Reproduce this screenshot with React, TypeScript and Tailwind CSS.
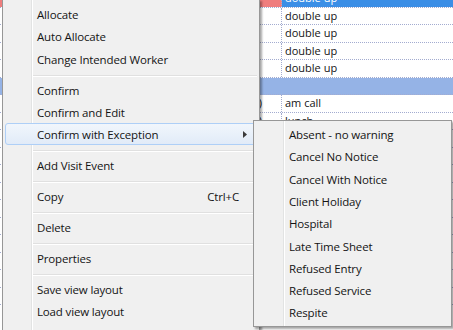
type Item = { label: string; shortcut?: string; sub?: boolean; active?: boolean } | null

const mainItems: Item[] = [
  { label: "Allocate" },
  { label: "Auto Allocate" },
  { label: "Change Intended Worker" },
  null,
  { label: "Confirm" },
  { label: "Confirm and Edit" },
  { label: "Confirm with Exception", sub: true, active: true },
  null,
  { label: "Add Visit Event" },
  null,
  { label: "Copy", shortcut: "Ctrl+C" },
  null,
  { label: "Delete" },
  null,
  { label: "Properties" },
  null,
  { label: "Save view layout" },
  { label: "Load view layout" },
  { label: "Default view layout" },
]

const subItems: Item[] = [
  { label: "Absent - no warning" },
  { label: "Cancel No Notice" },
  { label: "Cancel With Notice" },
  { label: "Client Holiday" },
  { label: "Hospital" },
  { label: "Late Time Sheet" },
  { label: "Refused Entry" },
  { label: "Refused Service" },
  { label: "Respite" },
]

const rows = [
  { kind: "sel", text: "double up" },
  { kind: "row", text: "double up" },
  { kind: "row", text: "double up" },
  { kind: "row", text: "double up" },
  { kind: "row", text: "double up" },
  { kind: "band", text: "" },
  { kind: "row", text: "am call", left: "10:00)" },
  { kind: "row", text: "lunch", left: "12:00)" },
  { kind: "row", text: "" },
  { kind: "row", text: "" },
  { kind: "row", text: "" },
  { kind: "row", text: "" },
  { kind: "row", text: "" },
  { kind: "row", text: "" },
  { kind: "row", text: "" },
  { kind: "row", text: "" },
  { kind: "row", text: "" },
  { kind: "row", text: "" },
]

function MenuRow({ item, textPad }: { item: NonNullable<Item>; textPad: string }) {
  return (
    <div
      className={`flex h-[22.3px] items-center rounded-[3px] border pt-px ${textPad} ${
        item.active
          ? "border-[#aecff7] bg-[linear-gradient(#f1f6fc,#e1ebf8)]"
          : "border-transparent"
      }`}
    >
      <span className="whitespace-nowrap">{item.label}</span>
      {item.shortcut && <span className="ml-auto mr-[17px]">{item.shortcut}</span>}
      {item.sub && (
        <svg className="ml-auto mr-[9px]" width="4" height="7" viewBox="0 0 4 7">
          <path d="M0 0 L4 3.5 L0 7 Z" fill="#3a3a3a" />
        </svg>
      )}
    </div>
  )
}

function Separator() {
  return (
    <div className="ml-[28px] h-[8.6px] pt-[5px]">
      <div className="h-px bg-[#e0e0e0]" />
      <div className="h-px bg-white" />
    </div>
  )
}

export default function App() {
  return (
    <div className="relative h-[330px] w-[453px] overflow-hidden bg-white font-['Open_Sans',sans-serif] text-[11.5px] tracking-[-0.15px] text-[#141414]">
      {/* grid behind the menus */}
      <div className="-mt-[10px] flex flex-col text-[11px] tracking-normal">
        {rows.map((r, i) => (
          <div
            key={i}
            className={`flex h-[17.5px] border-b border-dotted border-[#a3acd0] ${
              r.kind === "band" ? "bg-[#95b3e6]" : ""
            }`}
          >
            <div
              className={`flex w-[282px] items-center justify-end ${
                r.kind === "sel" ? "bg-[#ef7d7d]" : ""
              } ${r.kind === "band" ? "" : "border-r border-dotted border-[#a3acd0]"}`}
            >
              {r.left && <span className="mr-[19px]">{r.left}</span>}
            </div>
            <div
              className={`flex flex-1 items-center pl-[3px] ${
                r.kind === "sel" ? "bg-[#3a8ee6] text-white" : ""
              }`}
            >
              {r.text}
            </div>
          </div>
        ))}
      </div>

      {/* context menu */}
      <div className="absolute -top-px left-[2px] h-[360px] w-[258px] border border-[#979797] bg-[#f0f0f0] bg-[linear-gradient(to_right,transparent_28px,#e2e3e3_28px,#e2e3e3_29px,#fff_29px,#fff_30px,transparent_30px)] px-[2px] pt-[3px] shadow-[2px_2px_2px_rgba(0,0,0,0.35)]">
        {mainItems.map((it, i) =>
          it ? <MenuRow key={i} item={it} textPad="pl-[31px]" /> : <Separator key={i} />
        )}
      </div>

      {/* submenu */}
      <div className="absolute left-[253px] top-[120px] w-[199px] border border-[#979797] bg-[#f0f0f0] bg-[linear-gradient(to_right,transparent_29px,#e2e3e3_29px,#e2e3e3_30px,#fff_30px,#fff_31px,transparent_31px)] p-[2px] shadow-[2px_2px_2px_rgba(0,0,0,0.35)]">
        {subItems.map((it, i) => (it ? <MenuRow key={i} item={it} textPad="pl-[32px]" /> : null))}
      </div>
    </div>
  )
}
